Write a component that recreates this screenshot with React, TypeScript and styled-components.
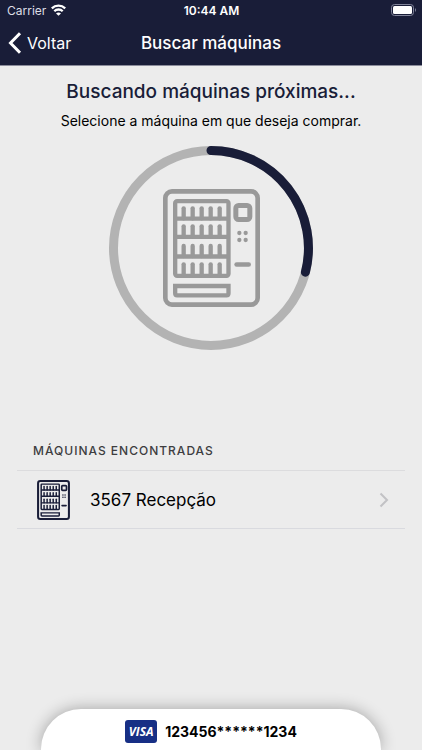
import React from "react";
import styled, { createGlobalStyle } from "styled-components";

const navy = "#191d38";

const GlobalStyle = createGlobalStyle`
  *, *::before, *::after { box-sizing: border-box; }
  body {
    margin: 0;
    background: #ececec;
    color: #000;
    font-family: Inter, "Liberation Sans", sans-serif;
  }
  h1, h2, p, ul { margin: 0; padding: 0; }
  button { font: inherit; color: inherit; background: none; border: 0; padding: 0; cursor: pointer; }
`;

const Screen = styled.div`
  display: flex;
  flex-direction: column;
  min-height: 100vh;
  overflow: hidden;
`;

const Header = styled.header`
  background: ${navy};
  color: #fff;
  border-bottom: 1px solid #8b8c9b;
`;

const StatusBar = styled.div`
  display: grid;
  grid-template-columns: 1fr auto 1fr;
  align-items: center;
  height: 20px;
  padding: 0 6px 0 7px;
  font-size: 12px;
`;

const Carrier = styled.span`
  display: flex;
  align-items: center;
  gap: 5px;
  color: #dddee5;
`;

const Clock = styled.time`
  font-weight: 600;
`;

const BatterySlot = styled.span`
  display: flex;
  justify-content: flex-end;
`;

const NavBar = styled.nav`
  display: grid;
  grid-template-columns: 1fr auto 1fr;
  align-items: center;
  height: 45px;
  padding: 0 8px;
`;

const BackButton = styled.button`
  display: flex;
  align-items: center;
  justify-self: start;
  gap: 5px;
  font-size: 16px;
`;

const NavTitle = styled.h1`
  font-size: 17px;
  font-weight: 500;
`;

const Main = styled.main`
  flex: 1;
  display: flex;
  flex-direction: column;
`;

const Search = styled.section`
  display: flex;
  flex-direction: column;
  align-items: center;
  padding-top: 13px;
  text-align: center;
`;

const SearchTitle = styled.h2`
  color: ${navy};
  font-size: 19px;
  line-height: 26px;
  font-weight: 500;
`;

const Hint = styled.p`
  margin-top: 6px;
  font-size: 14px;
  line-height: 20px;
`;

const Finder = styled.div`
  display: grid;
  place-items: center;
  margin-top: 15px;
  > * { grid-area: 1 / 1; }
`;

const Found = styled.section`
  margin: 91px 17px 0;
`;

const FoundTitle = styled.h2`
  padding: 0 16px 9px;
  color: #3d3d3f;
  font-size: 12px;
  line-height: 20px;
  font-weight: 500;
  letter-spacing: 1px;
`;

const MachineList = styled.ul`
  list-style: none;
  border-top: 1px solid #dcdcde;
`;

const MachineItem = styled.li`
  border-bottom: 1px solid #d9dadf;
`;

const MachineButton = styled.button`
  display: flex;
  align-items: center;
  width: 100%;
  height: 57px;
  padding: 0 16px 0 20px;
  text-align: left;
`;

const MachineName = styled.span`
  flex: 1;
  padding-left: 20px;
  font-size: 17px;
`;

const CardBar = styled.button`
  display: flex;
  align-items: center;
  justify-content: center;
  gap: 8px;
  height: 41px;
  margin: 0 41px;
  padding-top: 3px;
  border-radius: 40px 40px 0 0;
  background: #fff;
  box-shadow: 0 0 16px rgba(0, 0, 0, 0.32);
`;

const CardNumber = styled.span`
  font-size: 14px;
  font-weight: 700;
`;

const VisaBadge = styled.span`
  display: grid;
  place-items: center;
  width: 32px;
  height: 23px;
  border-radius: 3px;
  background: #172f85;
  color: #fff;
  font: italic 700 12px "Open Sans", sans-serif;
`;

type MachineIconProps = { width: number; height: number; color: string; frame?: number };

function MachineIcon({ width, height, color, frame = 14 }: MachineIconProps) {
  return (
    <svg width={width} height={height} viewBox="0 0 291 354" fill="none" stroke={color} strokeWidth="13" aria-hidden="true">
      <rect x={frame / 2} y={frame / 2} width={291 - frame} height={354 - frame} rx="20" strokeWidth={frame} />
      <rect x="36.5" y="36.5" width="160" height="224" rx="6" />
      <path d="M36 89H197M36 143.5H197M36 202.5H197" />
      {[57, 111, 170, 225].map((top) => (
        <g key={top}>
          {[62, 89, 116, 143, 170].map((x) => (
            <path key={x} d={`M${x} ${top + 31}V${top + 1}`} strokeLinecap="round" />
          ))}
        </g>
      ))}
      <rect x="218.5" y="49.5" width="42" height="42" rx="8" strokeWidth="15" />
      {[229, 248].map((x) =>
        [132, 153].map((y) => <circle key={`${x}-${y}`} cx={x} cy={y} r="6.5" fill={color} stroke="none" />)
      )}
      <path d="M221 226.5H257" strokeWidth="14" strokeLinecap="round" />
      <path d="M36.5 291H196.5V313Q196.5 319 190.5 319H42.5Q36.5 319 36.5 313Z" />
    </svg>
  );
}

function ProgressRing() {
  return (
    <svg width="204" height="204" viewBox="0 0 204 204" fill="none" strokeWidth="9" role="progressbar" aria-label="Buscando máquinas">
      <circle cx="102" cy="102" r="97.5" stroke="#b3b3b3" />
      <path d="M102 4.5A97.5 97.5 0 0 1 196.4 126.2" stroke={navy} strokeLinecap="round" />
    </svg>
  );
}

export default function App() {
  return (
    <>
      <GlobalStyle />
      <Screen>
        <Header>
          <StatusBar>
            <Carrier>
              Carrier
              <svg width="15" height="12" viewBox="0 0 15 12" fill="none" stroke="#fff" strokeWidth="2.3" aria-hidden="true">
                <path d="M.8 4.4A9.5 9.5 0 0 1 14.2 4.4M3.3 7.2A6 6 0 0 1 11.7 7.2" />
                <path d="M7.5 11.8L5 9.4Q7.5 7.4 10 9.4Z" fill="#fff" stroke="none" />
              </svg>
            </Carrier>
            <Clock>10:44 AM</Clock>
            <BatterySlot>
              <svg width="25" height="12" viewBox="0 0 25 12" aria-hidden="true">
                <rect x=".5" y=".5" width="22" height="11" rx="3" fill="none" stroke="#81849a" />
                <rect x="2" y="2" width="19" height="8" rx="1.5" fill="#fff" />
                <path d="M24 4Q26 6 24 8Z" fill="#81849a" />
              </svg>
            </BatterySlot>
          </StatusBar>
          <NavBar>
            <BackButton type="button">
              <svg width="14" height="22" viewBox="0 0 14 22" fill="none" stroke="#fff" strokeWidth="3" aria-hidden="true">
                <path d="M12 1.2L2.5 11L12 20.8" />
              </svg>
              Voltar
            </BackButton>
            <NavTitle>Buscar máquinas</NavTitle>
          </NavBar>
        </Header>
        <Main>
          <Search>
            <SearchTitle>Buscando máquinas próximas...</SearchTitle>
            <Hint>Selecione a máquina em que deseja comprar.</Hint>
            <Finder>
              <ProgressRing />
              <MachineIcon width={97} height={118} color="#999" />
            </Finder>
          </Search>
          <Found>
            <FoundTitle>MÁQUINAS ENCONTRADAS</FoundTitle>
            <MachineList>
              <MachineItem>
                <MachineButton type="button">
                  <MachineIcon width={33} height={40} color={navy} frame={18} />
                  <MachineName>3567 Recepção</MachineName>
                  <svg width="10" height="16" viewBox="0 0 10 16" fill="none" stroke="#c2c2c5" strokeWidth="2" aria-hidden="true">
                    <path d="M1.5 1.5L8 8L1.5 14.5" />
                  </svg>
                </MachineButton>
              </MachineItem>
            </MachineList>
          </Found>
        </Main>
        <CardBar type="button">
          <VisaBadge>VISA</VisaBadge>
          <CardNumber>123456******1234</CardNumber>
        </CardBar>
      </Screen>
    </>
  );
}
